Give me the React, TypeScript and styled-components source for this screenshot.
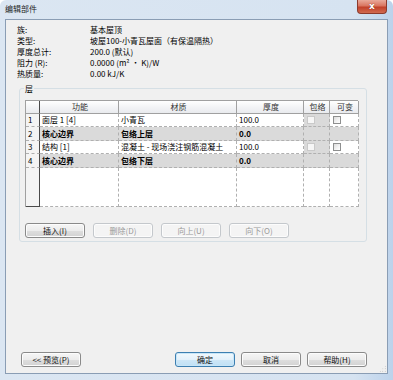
import { Fragment } from "react";
import styled, { createGlobalStyle } from "styled-components";

const GlobalStyle = createGlobalStyle`
  html, body { margin: 0; padding: 0; }
  body {
    width: 393px;
    height: 380px;
    overflow: hidden;
    background: #ffffff;
    font-family: "Noto Sans CJK SC", "Noto Sans", sans-serif;
    font-size: 8px;
    color: #000;
  }
`;

const Window = styled.div`
  width: 393px;
  height: 380px;
  box-sizing: border-box;
  display: flex;
  flex-direction: column;
  padding: 0 5px 6px 5px;
  border-radius: 6px 6px 0 0;
  background: linear-gradient(90deg, #dbe6f2 0%, #d6e3f1 90%, #bcd2eb 100%);
`;

const TitleBar = styled.div`
  height: 19px;
  display: flex;
  align-items: flex-start;
`;

const Title = styled.div`
  line-height: 18px;
  font-size: 8px;
  color: #1e1e1e;
`;

const CloseButton = styled.div`
  margin-left: auto;
  margin-right: 1px;
  width: 30px;
  height: 14px;
  box-sizing: border-box;
  border: 1px solid #8c3a2c;
  border-top: none;
  border-radius: 0 0 4px 4px;
  background: linear-gradient(180deg, #e9a99a 0%, #d97560 45%, #c2412a 55%, #d06a50 100%);
  display: flex;
  align-items: center;
  justify-content: center;
  color: #fff;
  font-family: "DejaVu Sans", sans-serif;
  font-weight: bold;
  font-size: 9px;
  line-height: 1;
  text-shadow: 0 0 1px #6a1e10;
`;

const Client = styled.div`
  flex: 1;
  display: flex;
  flex-direction: column;
  background: #f0f0f0;
  border: 1px solid #8a9db4;
  position: relative;
`;

const InfoGrid = styled.div`
  display: grid;
  grid-template-columns: 73px auto;
  padding: 4px 0 0 11px;
  line-height: 11px;
`;

const Group = styled.fieldset`
  margin: 4px 20px 0 13px;
  padding: 6px 8px 3px 5px;
  border: 1px solid #d5dfe5;
  border-radius: 3px;
  min-width: 0;
`;

const Legend = styled.legend`
  padding: 0 1px;
  margin-left: -1px;
  line-height: 11px;
`;

const Table = styled.div`
  display: grid;
  grid-template-columns: 14px 79px 118px 67px 26px 29px;
  grid-template-rows: 13px 13px 14px 13px 14px 39px;
  width: 333px;
  box-sizing: border-box;
  border-top: 1px solid #a0a0a0;
  border-left: 1px solid #a0a0a0;
  background: #fff;
`;

type CellKind = "head" | "rowhead" | "data" | "cornerhead";

const Cell = styled.div<{ $kind: CellKind; $shade?: boolean; $bold?: boolean; $last?: boolean }>`
  box-sizing: border-box;
  display: flex;
  align-items: center;
  overflow: hidden;
  white-space: nowrap;
  padding-left: 2px;
  line-height: 12px;
  font-weight: ${(p) => (p.$bold ? "bold" : "normal")};
  justify-content: ${(p) => (p.$kind === "head" ? "center" : "flex-start")};
  color: ${(p) => (p.$kind === "head" ? "#333" : "#000")};
  background: ${(p) =>
    p.$kind === "head" || p.$kind === "cornerhead"
      ? "linear-gradient(180deg, #ffffff 0%, #f3f4f6 50%, #e9ebee 100%)"
      : p.$kind === "rowhead"
      ? "#f4f4f4"
      : p.$shade
      ? "#dadada"
      : "#ffffff"};
  border-right: ${(p) =>
    p.$kind === "rowhead" || p.$kind === "cornerhead"
      ? "1px solid #4a4a4a"
      : p.$kind === "head"
      ? "1px solid #a0a0a0"
      : "1px dashed #b0b0b0"};
  border-bottom: ${(p) =>
    p.$kind === "head" || p.$kind === "cornerhead"
      ? "1px solid #a0a0a0"
      : p.$kind === "rowhead" && p.$last
      ? "1px solid #4a4a4a"
      : "1px dashed #b0b0b0"};
`;

const Check = styled.span<{ $disabled?: boolean }>`
  display: inline-block;
  width: 8px;
  height: 8px;
  box-sizing: border-box;
  margin-left: 1px;
  border: 1px solid ${(p) => (p.$disabled ? "#c9c9c9" : "#8e8f8f")};
  background: ${(p) =>
    p.$disabled ? "#f6f6f6" : "linear-gradient(135deg, #dcdcdc 0%, #f4f4f4 60%, #ffffff 100%)"};
`;

const ButtonRow = styled.div`
  display: flex;
  gap: 8px;
  margin-top: 16px;
`;

const Button = styled.div<{ $disabled?: boolean; $default?: boolean }>`
  width: 60px;
  height: 15px;
  box-sizing: border-box;
  display: flex;
  align-items: center;
  justify-content: center;
  border-radius: 3px;
  font-size: 8px;
  white-space: nowrap;
  border: 1px solid
    ${(p) => (p.$disabled ? "#c4c8cc" : p.$default ? "#3c7fb1" : "#8a8a8a")};
  color: ${(p) => (p.$disabled ? "#9a9a9a" : "#111")};
  background: ${(p) =>
    p.$disabled
      ? "#f4f4f4"
      : p.$default
      ? "linear-gradient(180deg, #f2f9fd 0%, #e3f1fb 50%, #cfe7f7 51%, #bfe0f5 100%)"
      : "linear-gradient(180deg, #f6f6f6 0%, #ececec 50%, #dedede 51%, #d2d2d2 100%)"};
  box-shadow: ${(p) => (p.$default ? "inset 0 0 0 1px #c8e6f8" : "inset 0 0 0 1px #fcfcfc")};
`;

const Footer = styled.div`
  margin-top: auto;
  display: flex;
  gap: 6px;
  padding: 0 20px 6px 15px;
`;

const Spacer = styled.div`
  flex: 1;
`;

const Grip = styled.div`
  position: absolute;
  right: 1px;
  bottom: 1px;
  width: 7px;
  height: 7px;
  background-image: radial-gradient(circle, #b5b5b5 0.7px, transparent 0.8px);
  background-size: 2.5px 2.5px;
  clip-path: polygon(100% 0, 100% 100%, 0 100%);
`;

const info: [string, string][] = [
  ["族:", "基本屋顶"],
  ["类型:", "坡屋100-小青瓦屋面（有保温隔热）"],
  ["厚度总计:", "200.0 (默认)"],
  ["阻力 (R):", "0.0000 (m² · K)/W"],
  ["热质量:", "0.00 kJ/K"],
];

type Layer = { fn: string; mat: string; thick: string; core?: boolean };

const layers: Layer[] = [
  { fn: "面层 1 [4]", mat: "小青瓦", thick: "100.0" },
  { fn: "核心边界", mat: "包络上层", thick: "0.0", core: true },
  { fn: "结构 [1]", mat: "混凝土 - 现场浇注钢筋混凝土", thick: "100.0" },
  { fn: "核心边界", mat: "包络下层", thick: "0.0", core: true },
];

export default function App() {
  return (
    <>
      <GlobalStyle />
      <Window>
        <TitleBar>
          <Title>编辑部件</Title>
          <CloseButton>x</CloseButton>
        </TitleBar>
        <Client>
          <InfoGrid>
            {info.map(([k, v]) => (
              <Fragment key={k}>
                <span>{k}</span>
                <span>{v}</span>
              </Fragment>
            ))}
          </InfoGrid>

          <Group>
            <Legend>层</Legend>
            <Table>
              <Cell $kind="cornerhead" />
              <Cell $kind="head">功能</Cell>
              <Cell $kind="head">材质</Cell>
              <Cell $kind="head">厚度</Cell>
              <Cell $kind="head">包络</Cell>
              <Cell $kind="head">可变</Cell>
              {layers.map((l, i) => (
                <Fragment key={i}>
                  <Cell $kind="rowhead">{i + 1}</Cell>
                  <Cell $kind="data" $shade={l.core} $bold={l.core}>{l.fn}</Cell>
                  <Cell $kind="data" $shade={l.core} $bold={l.core}>{l.mat}</Cell>
                  <Cell $kind="data" $shade={l.core} $bold={l.core}>{l.thick}</Cell>
                  <Cell $kind="data" $shade>{!l.core && <Check $disabled />}</Cell>
                  <Cell $kind="data" $shade={l.core}>{!l.core && <Check />}</Cell>
                </Fragment>
              ))}
              <Cell $kind="rowhead" $last />
              <Cell $kind="data" />
              <Cell $kind="data" />
              <Cell $kind="data" />
              <Cell $kind="data" />
              <Cell $kind="data" />
            </Table>
            <ButtonRow>
              <Button>插入(I)</Button>
              <Button $disabled>删除(D)</Button>
              <Button $disabled>向上(U)</Button>
              <Button $disabled>向下(O)</Button>
            </ButtonRow>
          </Group>

          <Footer>
            <Button>&lt;&lt; 预览(P)</Button>
            <Spacer />
            <Button $default>确定</Button>
            <Button>取消</Button>
            <Button>帮助(H)</Button>
          </Footer>
          <Grip />
        </Client>
      </Window>
    </>
  );
}
